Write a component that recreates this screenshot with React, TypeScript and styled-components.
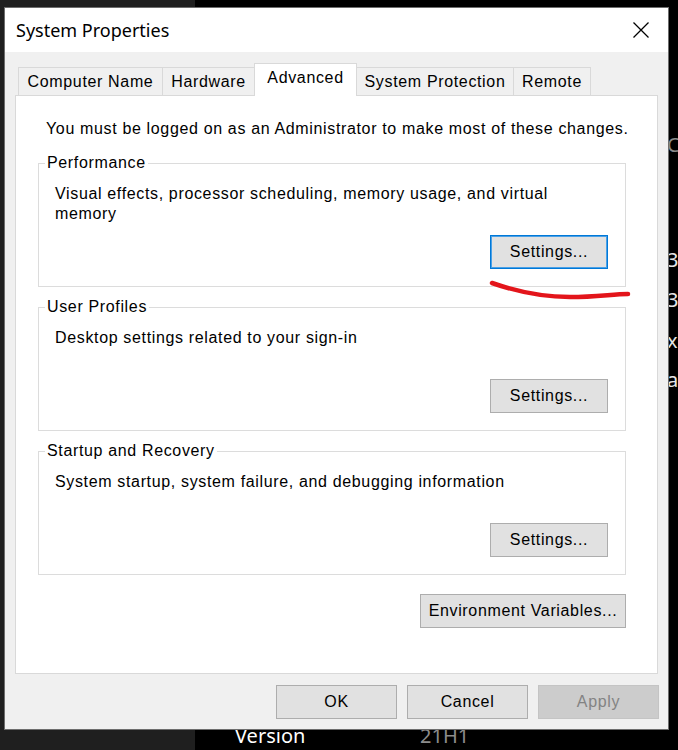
import React from 'react';
import styled, { createGlobalStyle } from 'styled-components';

const GlobalStyle = createGlobalStyle`
    * { box-sizing: border-box; }
    html, body {
        margin: 0;
        padding: 0;
        background: #000;
    }
    body {
        width: 678px;
        height: 750px;
        overflow: hidden;
    }
`;

const Desktop = styled.div`
    position: relative;
    width: 678px;
    height: 750px;
    background: #000;
    overflow: hidden;
    font-family: "Liberation Sans", Arial, sans-serif;
`;

// settings app in the background (dark theme)
const NavPane = styled.div`
    position: absolute;
    left: 0;
    top: 0;
    width: 195px;
    height: 100%;
    background: #1f1f1f;
`;

const AboutPane = styled.div`
    position: absolute;
    left: 667px;
    top: 133px;
    display: flex;
    flex-direction: column;
    font-family: "Noto Sans", sans-serif;
    font-size: 20px;
    line-height: 24px;
`;

const AboutLine = styled.span<{ $gap: number; $dim?: boolean }>`
    margin-top: ${p => p.$gap}px;
    color: ${p => (p.$dim ? '#8a8a8a' : '#e6e6e6')};
    white-space: nowrap;
`;

const VersionRow = styled.div`
    position: absolute;
    left: 235px;
    top: 724px;
    display: flex;
    font-family: "Noto Sans", sans-serif;
    font-size: 20px;
    line-height: 24px;
    .label {
        width: 185px;
        color: #fff;
    }
    .value {
        color: #8c8c8c;
    }
`;

const Window = styled.div`
    position: absolute;
    left: 4px;
    top: 7px;
    width: 665px;
    height: 723px;
    border: 1px solid #6d6d6d;
    background: #f0f0f0;
    display: flex;
    flex-direction: column;
    z-index: 1;
    letter-spacing: 0.65px;
`;

const TitleBar = styled.div`
    height: 44px;
    flex-shrink: 0;
    background: #fff;
    display: flex;
    align-items: center;
    justify-content: space-between;
    padding: 0 4px 0 11px;
`;

const Title = styled.span`
    font-family: "Noto Sans", sans-serif;
    font-size: 18px;
    letter-spacing: 0;
    color: #000;
`;

const CloseButton = styled.button`
    width: 46px;
    height: 44px;
    border: 0;
    padding: 0;
    background: transparent;
    display: flex;
    align-items: center;
    justify-content: center;
`;

const Body = styled.div`
    flex: 1;
    display: flex;
    flex-direction: column;
    padding: 11px 10px 0 10px;
`;

const TabRow = styled.div`
    height: 33px;
    margin-bottom: -1px;
    padding-left: 3px;
    display: flex;
    align-items: flex-end;
    position: relative;
    z-index: 2;
`;

const Tab = styled.div<{ $w: number; $active?: boolean }>`
    width: ${p => p.$w}px;
    height: ${p => (p.$active ? 33 : 28)}px;
    margin-bottom: ${p => (p.$active ? 0 : 1)}px;
    & + & {
        margin-left: -1px;
    }
    border: 1px solid #d9d9d9;
    border-bottom: none;
    background: ${p => (p.$active ? '#fff' : '#f0f0f0')};
    position: relative;
    z-index: ${p => (p.$active ? 1 : 0)};
    display: flex;
    align-items: center;
    justify-content: center;
    padding-bottom: ${p => (p.$active ? 4 : 0)}px;
    font-size: 16px;
    color: #000;
    white-space: nowrap;
`;

const Panel = styled.div`
    height: 579px;
    background: #fff;
    border: 1px solid #d9d9d9;
    padding: 23px 31px 0 22px;
    display: flex;
    flex-direction: column;
`;

const Notice = styled.div`
    padding-left: 8px;
    font-size: 16px;
    line-height: 20px;
    color: #000;
    white-space: nowrap;
`;

const Group = styled.div<{ $top: number }>`
    position: relative;
    height: 124px;
    margin-top: ${p => p.$top}px;
    border: 1px solid #dcdcdc;
    padding: 20px 17px 17px 16px;
    display: flex;
    flex-direction: column;
`;

const Legend = styled.span`
    position: absolute;
    left: 6px;
    top: -10px;
    padding: 0 2px;
    background: #fff;
    font-size: 16px;
    line-height: 18px;
    color: #000;
`;

const Description = styled.div`
    font-size: 16px;
    line-height: 20px;
    color: #000;
    white-space: nowrap;
`;

const Button = styled.button<{ $w: number; $focused?: boolean; $disabled?: boolean }>`
    width: ${p => p.$w}px;
    height: 34px;
    flex-shrink: 0;
    padding: 0;
    font-family: "Liberation Sans", Arial, sans-serif;
    font-size: 16px;
    letter-spacing: 0.65px;
    color: ${p => (p.$disabled ? '#838383' : '#000')};
    background: ${p => (p.$disabled ? '#cccccc' : '#e1e1e1')};
    border: 1px solid ${p => (p.$focused ? '#0078d7' : p.$disabled ? '#c4c4c4' : '#adadad')};
    box-shadow: ${p => (p.$focused ? 'inset 0 0 0 1px #4aa0e6' : 'none')};
`;

const GroupButton = styled(Button)`
    margin-top: auto;
    align-self: flex-end;
`;

const EnvButton = styled(Button)`
    margin-top: 19px;
    align-self: flex-end;
`;

const Footer = styled.div`
    display: flex;
    justify-content: flex-end;
    gap: 10px;
    margin: 11px -1px 0 0;
`;

const Scribble = styled.svg`
    position: absolute;
    left: 488px;
    top: 278px;
    z-index: 3;
    pointer-events: none;
`;

const tabs = [
    { label: 'Computer Name', w: 145 },
    { label: 'Hardware', w: 93 },
    { label: 'Advanced', w: 103, active: true },
    { label: 'System Protection', w: 158 },
    { label: 'Remote', w: 78 },
];

const groups = [
    { title: 'Performance', text: <>Visual effects, processor scheduling, memory usage, and virtual<br />memory</>, top: 24, focused: true },
    { title: 'User Profiles', text: <>Desktop settings related to your sign-in</>, top: 20 },
    { title: 'Startup and Recovery', text: <>System startup, system failure, and debugging information</>, top: 20 },
];

const App: React.FC = () => {
    return (
        <Desktop>
            <GlobalStyle />
            <NavPane />
            <AboutPane>
                <AboutLine $gap={0} $dim>Co</AboutLine>
                <AboutLine $gap={91}>3</AboutLine>
                <AboutLine $gap={16}>38</AboutLine>
                <AboutLine $gap={17}>x</AboutLine>
                <AboutLine $gap={15}>a</AboutLine>
            </AboutPane>
            <VersionRow>
                <span className='label'>Version</span>
                <span className='value'>21H1</span>
            </VersionRow>

            <Window>
                <TitleBar>
                    <Title>System Properties</Title>
                    <CloseButton aria-label='Close'>
                        <svg width='16' height='16' viewBox='0 0 16 16'>
                            <path d='M0.5 0.5 L15.5 15.5 M15.5 0.5 L0.5 15.5' stroke='#000' strokeWidth='1.3' fill='none' />
                        </svg>
                    </CloseButton>
                </TitleBar>
                <Body>
                    <TabRow>
                        {tabs.map((t) => (
                            <Tab key={t.label} $w={t.w} $active={t.active}>{t.label}</Tab>
                        ))}
                    </TabRow>
                    <Panel>
                        <Notice>You must be logged on as an Administrator to make most of these changes.</Notice>
                        {groups.map((g) => (
                            <Group key={g.title} $top={g.top}>
                                <Legend>{g.title}</Legend>
                                <Description>{g.text}</Description>
                                <GroupButton $w={118} $focused={g.focused}>Settings...</GroupButton>
                            </Group>
                        ))}
                        <EnvButton $w={206}>Environment Variables...</EnvButton>
                    </Panel>
                    <Footer>
                        <Button $w={121}>OK</Button>
                        <Button $w={121}>Cancel</Button>
                        <Button $w={121} $disabled>Apply</Button>
                    </Footer>
                </Body>
            </Window>

            <Scribble width='145' height='24' viewBox='0 0 145 24'>
                <path d='M4 5 C 30 14, 55 19, 82 19 S 125 16, 140 16' stroke='#e3151b' strokeWidth='4.5' strokeLinecap='round' fill='none' />
            </Scribble>
        </Desktop>
    );
};

export default App;
